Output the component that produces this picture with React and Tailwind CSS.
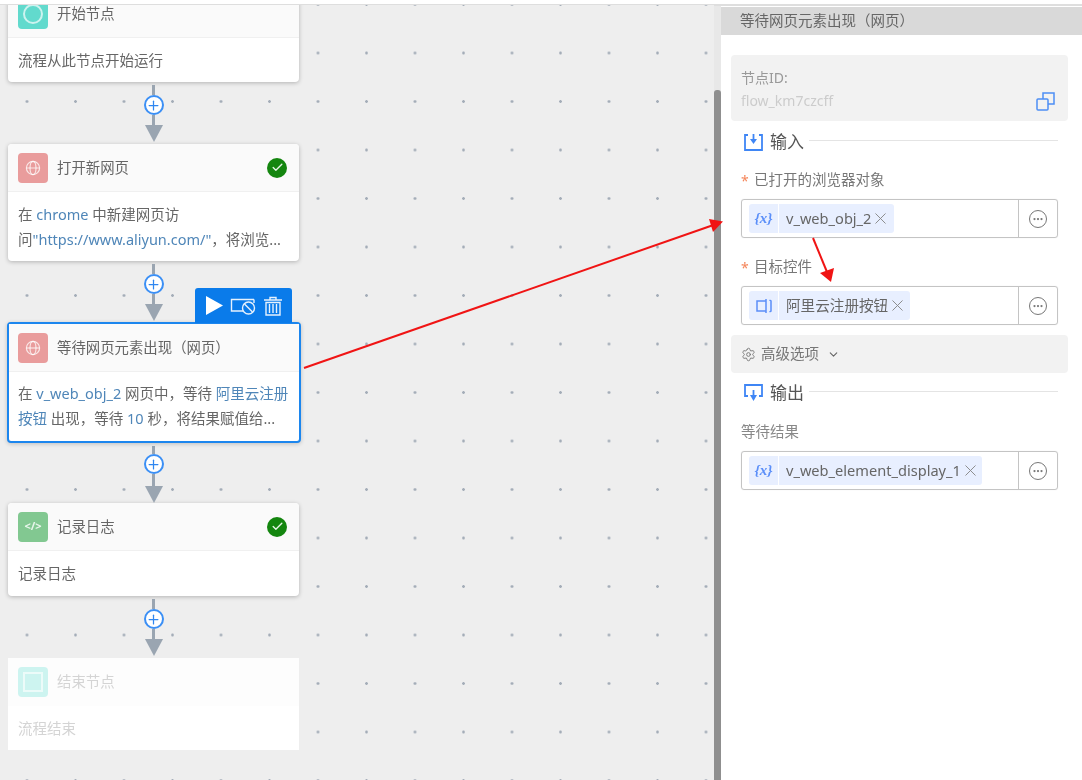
import React from "react";
import { Check, Plus, Settings, ChevronDown, X, Ellipsis } from "lucide-react";

const font = '[font-family:"Noto_Sans","Noto_Sans_CJK_SC",sans-serif]';

function Globe() {
  return (
    <svg width="16" height="16" viewBox="0 0 16 16" fill="none" stroke="#fff" strokeOpacity="0.75" strokeWidth="1.2">
      <circle cx="8" cy="8" r="6.6" />
      <ellipse cx="8" cy="8" rx="3" ry="6.6" />
      <path d="M1.4 8h13.2" />
    </svg>
  );
}

function IconBox({ color, children }) {
  return (
    <div className={`w-[30px] h-[30px] rounded-[4px] flex items-center justify-center shrink-0 ${color}`}>
      {children}
    </div>
  );
}

function Done() {
  return (
    <div className="ml-auto w-[20px] h-[20px] rounded-full bg-[#14860f] flex items-center justify-center">
      <Check size={13} color="#e8f5e8" strokeWidth={2.5} />
    </div>
  );
}

function Connector({ h, top = "h-[10px]", mid = "h-[10px]" }) {
  return (
    <div className={`w-[291px] flex flex-col items-center ${h}`}>
      <div className={`mt-[3px] w-[3px] bg-[#9aa5b1] ${top}`} />
      <div className="w-[20px] h-[20px] rounded-full border-2 border-[#3b8ff5] bg-white flex items-center justify-center shrink-0">
        <Plus size={15} color="#2f86f0" strokeWidth={2} />
      </div>
      <div className={`w-[3px] bg-[#9aa5b1] ${mid}`} />
      <svg width="18" height="17" viewBox="0 0 18 17" className="shrink-0">
        <polygon points="0,0 18,0 9,17" fill="#9aa5b1" />
      </svg>
    </div>
  );
}

function Card({ icon, title, done, children, className = "" }) {
  return (
    <div className={`w-[291px] rounded-[4px] bg-white shadow-[0_1px_4px_rgba(0,0,0,0.25)] overflow-hidden ${className}`}>
      <div className="h-[48px] bg-[#fafafa] border-b border-[#f0f0f0] flex items-center pl-[10px] pr-[12px] gap-[9px]">
        {icon}
        <span className="text-[14.4px] text-[#666]">{title}</span>
        {done && <Done />}
      </div>
      <div className="px-[10px] pt-[10px] text-[14.5px] leading-[24.5px] text-[#666] whitespace-nowrap">{children}</div>
    </div>
  );
}

const L = ({ children }) => <span className="text-[#4f86b8]">{children}</span>;

function Toolbar() {
  return (
    <div className="absolute -top-[36px] right-[7px] w-[97px] h-[35px] rounded-t-[3px] bg-[#0a7bea] flex items-center pl-[10px] gap-[7px]">
      <svg width="18" height="19" viewBox="0 0 18 19"><polygon points="1,0 18,9.5 1,19" fill="#fff" /></svg>
      <svg width="26" height="20" viewBox="0 0 26 20" fill="none" stroke="#e6f1fd" strokeWidth="1.4">
        <path d="M13 15H1.5V3.5H24" />
        <path d="M24 3.5V7" />
        <circle cx="18.5" cy="12" r="6" />
        <path d="M14.5 8l8 8" />
      </svg>
      <svg width="20" height="20" viewBox="0 0 20 20" fill="none" stroke="#e6f1fd" strokeWidth="1.4">
        <path d="M1 4h18M7 4V1.5h6V4" />
        <path d="M3 6.5h14V19H3z" />
        <path d="M6.5 8v9M10 8v9M13.5 8v9" />
      </svg>
    </div>
  );
}

function VarIcon() {
  return <span className="text-[15px] font-bold italic text-[#5b8ff9] [font-family:'Liberation_Serif',serif]">{"{x}"}</span>;
}

function CtrlIcon() {
  return (
    <svg width="16" height="18" viewBox="0 0 16 18" fill="none" stroke="#5b8ff9" strokeWidth="1.5">
      <path d="M10 4H1v10h9" />
      <path d="M10 2v14M13.5 3l1.5 1v10l-1.5 1" />
    </svg>
  );
}

function Field({ icon, text, tagW, className = "" }) {
  return (
    <div className={`ml-[20px] mr-[24px] h-[39px] rounded-[3px] border border-[#c4c4c4] shadow-[0_0_1px_rgba(0,0,0,0.15)] flex items-center ${className}`}>
      <div className="flex-1 flex items-center pl-[7px]">
        <div className="flex h-[29px] text-[14.6px] text-[#666]">
          <div className="w-[29px] bg-[#e8efff] rounded-l-[3px] flex items-center justify-center">{icon}</div>
          <div className={`ml-px bg-[#e8efff] rounded-r-[3px] flex items-center pl-[7px] ${tagW}`}>
            <span className="whitespace-nowrap">{text}</span>
            <X size={19} color="#888" strokeWidth={1.2} className="shrink-0" />
          </div>
        </div>
      </div>
      <div className="w-[39px] h-full border-l border-[#c4c4c4] flex items-center justify-center pr-px">
        <div className="w-[18px] h-[18px] rounded-full border-[1.5px] border-[#777] flex items-center justify-center">
          <Ellipsis size={12} color="#777" strokeWidth={2.5} />
        </div>
      </div>
    </div>
  );
}

function Label({ children, className = "" }) {
  return (
    <div className={`ml-[20px] h-[20px] flex items-center text-[14.5px] text-[#777] ${className}`}>
      <span className="text-[#f5865a] w-[13px] text-[14px]">*</span>
      {children}
    </div>
  );
}

function Section({ icon, title, className = "" }) {
  return (
    <div className={`h-[22px] ml-[23px] mr-[24px] flex items-center ${className}`}>
      {icon}
      <span className="ml-[7px] text-[17px] text-[#555]">{title}</span>
      <div className="flex-1 h-px bg-[#e4e4e4] ml-[5px] -mt-[3px]" />
    </div>
  );
}

export default function App() {
  return (
    <div className={`relative w-[1082px] h-[780px] overflow-hidden bg-white flex flex-col blur-[0.5px] ${font}`}>
      <div className="h-[6px] shrink-0 bg-white border-b-2 border-[#dedede]" />
      <div className="flex-1 flex min-h-0">
        <div className="w-[714px] shrink-0 overflow-hidden pl-[8px] -mt-px bg-[#eeeeee] bg-[radial-gradient(circle,#a4adb8_1.1px,transparent_1.6px)] bg-[size:48.5px_48.5px] bg-[position:2.75px_-24.75px]">
          <Card
            className="-mt-[15px] h-[92px]"
            title="开始节点"
            icon={
              <IconBox color="bg-[#62dacd]">
                <div className="w-[20px] h-[20px] rounded-full border-2 border-[#cdf3ef]" />
              </IconBox>
            }
          >
            流程从此节点开始运行
          </Card>
          <Connector h="h-[62px]" />
          <Card done title="打开新网页" icon={<IconBox color="bg-[#e99c9c]"><Globe /></IconBox>} className="h-[117px]">
            <div>在 <L>chrome</L> 中新建网页访</div>
            <div>问<L>"https://www.aliyun.com/"</L>，将浏览...</div>
          </Card>
          <Connector h="h-[61px]" />
          <div className="relative -ml-px w-[294px] rounded-[4px] border-2 border-[#1c86ee] bg-white h-[121px] shadow-[0_1px_4px_rgba(0,0,0,0.2)]">
            <Toolbar />
            <div className="h-[48px] bg-[#fafafa] border-b border-[#f0f0f0] flex items-center pl-[9px] gap-[9px]">
              <IconBox color="bg-[#e99c9c]"><Globe /></IconBox>
              <span className="text-[14.4px] text-[#666]">等待网页元素出现（网页）</span>
            </div>
            <div className="px-[9px] pt-[9px] text-[14.5px] leading-[24.5px] text-[#666] whitespace-nowrap">
              <div>在 <L>v_web_obj_2</L> 网页中，等待 <L>阿里云注册</L></div>
              <div><L>按钮</L> 出现，等待 <L>10</L> 秒，将结果赋值给...</div>
            </div>
          </div>
          <Connector h="h-[60px]" top="h-[8px]" mid="h-[12px]" />
          <Card
            done
            title="记录日志"
            className="h-[93px]"
            icon={
              <IconBox color="bg-[#82c891]">
                <span className="text-[11px] font-bold text-[#e8f6eb]">{"</>"}</span>
              </IconBox>
            }
          >
            记录日志
          </Card>
          <Connector h="h-[62px]" />
          <div className="w-[291px] h-[92px] bg-white">
            <div className="h-[48px] bg-[#fdfdfd] flex items-center pl-[10px] gap-[9px]">
              <IconBox color="bg-[#cdf4f0]">
                <div className="w-[20px] h-[20px] border-2 border-[#ecfbf9]" />
              </IconBox>
              <span className="text-[14.4px] text-[#d4d4d4]">结束节点</span>
            </div>
            <div className="px-[10px] pt-[10px] text-[14.5px] leading-[24.5px] text-[#d4d4d4]">流程结束</div>
          </div>
        </div>
        <div className="w-[7px] shrink-0 bg-[#e8e8e8] pt-[84px] flex flex-col">
          <div className="flex-1 bg-[#8f8f8f] rounded-t-[3px]" />
        </div>
        <div className="flex-1 min-w-0 bg-white pt-px">
          <div className="h-[28px] bg-[#d9d9d9] flex items-center pl-[19px] text-[14.5px] text-[#666]">
            等待网页元素出现（网页）
          </div>
          <div className="mt-[20px] ml-[10px] mr-[14px] h-[66px] rounded-[4px] bg-[#f2f2f2] flex items-end pl-[10px] pr-[13px] pb-[9px]">
            <div className="flex-1">
              <div className="text-[14px] leading-[24px] text-[#999]">节点ID:</div>
              <div className="text-[14px] leading-[22px] text-[#ccc]">flow_km7czcff</div>
            </div>
            <svg width="19" height="19" viewBox="0 0 19 19" fill="none" stroke="#4d8ff5" strokeWidth="1.5" className="mb-[1px]">
              <rect x="1" y="7" width="11" height="11" rx="1" />
              <path d="M7 7V1h11v11h-6" />
            </svg>
          </div>
          <Section
            className="mt-[10px]"
            title="输入"
            icon={
              <svg width="19" height="18" viewBox="0 0 19 18" fill="none" stroke="#3f86f5" strokeWidth="1.8">
                <path d="M4 2H1v15h17V2h-3" />
                <path d="M9.5 1v8" />
                <polygon points="6,6 13,6 9.5,11" fill="#3f86f5" stroke="none" />
              </svg>
            }
          />
          <Label className="mt-[17px]">已打开的浏览器对象</Label>
          <Field className="mt-[9px]" icon={<VarIcon />} text="v_web_obj_2" tagW="w-[115px]" />
          <Label className="mt-[19px]">目标控件</Label>
          <Field className="mt-[9px]" icon={<CtrlIcon />} text="阿里云注册按钮" tagW="w-[131px]" />
          <div className="mt-[10px] ml-[10px] mr-[14px] h-[38px] rounded-[4px] bg-[#f2f2f2] flex items-center pl-[10px] text-[14.5px] text-[#777]">
            <Settings size={15} color="#777" strokeWidth={1.5} />
            <span className="ml-[5px]">高级选项</span>
            <ChevronDown size={13} color="#666" strokeWidth={2} className="ml-[8px]" />
          </div>
          <Section
            className="mt-[9px]"
            title="输出"
            icon={
              <svg width="19" height="18" viewBox="0 0 19 18" fill="none" stroke="#3f86f5" strokeWidth="1.8">
                <path d="M4 12H1V1h17v11h-3" />
                <path d="M9.5 6v7" />
                <polygon points="6,11 13,11 9.5,17" fill="#3f86f5" stroke="none" />
              </svg>
            }
          />
          <div className="mt-[18px] ml-[20px] h-[20px] flex items-center text-[14.5px] text-[#888]">等待结果</div>
          <Field className="mt-[9px]" icon={<VarIcon />} text="v_web_element_display_1" tagW="w-[203px]" />
        </div>
      </div>
      <svg className="absolute inset-0 pointer-events-none" width="1082" height="780" viewBox="0 0 1082 780">
        <path d="M304 368L712 225.5" stroke="#f01414" strokeWidth="2" />
        <polygon points="723,221.5 709,219 713,232" fill="#f01414" />
        <path d="M813 238L827 272" stroke="#f01414" strokeWidth="2" />
        <polygon points="831,282 820,273 834,268" fill="#f01414" />
      </svg>
    </div>
  );
}
